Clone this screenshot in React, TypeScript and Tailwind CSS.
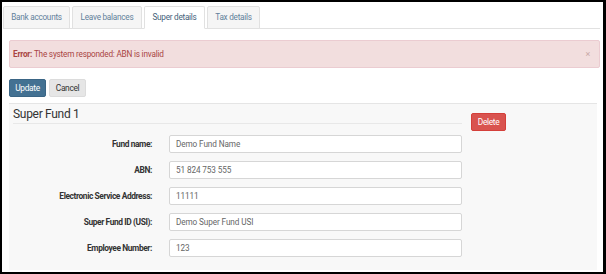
import React from 'react';

const tabs = [
  { name: 'Bank accounts', width: 'w-[67px]' },
  { name: 'Leave balances', width: 'w-[70px]' },
  { name: 'Super details', width: 'w-[61px]', active: true },
  { name: 'Tax details', width: 'w-[53px]' },
];

const fields = [
  { label: 'Fund name:', value: 'Demo Fund Name' },
  { label: 'ABN:', value: '51 824 753 555' },
  { label: 'Electronic Service Address:', value: '11111' },
  { label: 'Super Fund ID (USI):', value: 'Demo Super Fund USI' },
  { label: 'Employee Number:', value: '123' },
];

const App = () => {
  return (
    <div className="w-[606px] h-[274px] bg-black pt-[2px] pl-[2px] pr-[3px] pb-[2px] font-['Roboto',sans-serif]">
      <div className="h-full bg-white flex flex-col overflow-hidden">
        {/* Tabs */}
        <div className="mt-[4px] ml-[1px] mr-[3px] flex gap-[2px] border-b border-[#e1e1e1]">
          {tabs.map((tab) => (
            <div
              key={tab.name}
              className={`${tab.width} h-[23px] -mb-px flex items-center justify-center text-[8.2px] tracking-[-0.25px] border border-[#e1e1e1] rounded-t-[2px] ${
                tab.active ? 'bg-white border-b-white text-[#44617a]' : 'bg-[#f5f5f5] text-[#62819b]'
              }`}
            >
              {tab.name}
            </div>
          ))}
        </div>

        {/* Error alert */}
        <div className="mt-[11px] ml-[7px] mr-[3px] h-[28px] flex items-center justify-between bg-[#f2dede] border border-[#ebccd1] rounded-[2px] pl-[3px] pr-[9px] text-[8.2px] tracking-[-0.2px] text-[#a94442]">
          <span>
            <span className="font-bold">Error:</span> The system responded: ABN is invalid
          </span>
          <span className="text-[9px] text-[#c9a8a8] leading-none">×</span>
        </div>

        {/* Actions */}
        <div className="mt-[11px] ml-[7px] flex gap-[3px]">
          <button className="w-[37px] h-[18px] rounded-[2px] bg-[#437192] border border-[#3a6585] text-white text-[8.4px] tracking-[-0.35px]">
            Update
          </button>
          <button className="w-[37px] h-[18px] rounded-[2px] bg-[#e6e6e6] border border-[#dcdcdc] text-[#333] text-[8.4px] tracking-[-0.35px]">
            Cancel
          </button>
        </div>

        {/* Super fund panel */}
        <div className="mt-[6px] ml-[7px] mr-[6px] flex-1 mb-[2px] bg-[#f8f8f8] border-t border-[#e5e5e5] flex">
          <div className="w-[453px] flex flex-col">
            <div className="ml-[4px] pt-[3px] h-[20px] border-b border-[#e8e8e8] text-[12px] tracking-[-0.3px] leading-[15px] text-[#333]">
              Super Fund 1
            </div>
            <div className="mt-[11px] flex flex-col gap-[8px]">
              {fields.map((f) => (
                <div key={f.label} className="flex items-center h-[18px]">
                  <div className="w-[143px] text-right text-[8.4px] tracking-[-0.4px] font-bold text-[#333]">{f.label}</div>
                  <div className="ml-[17px] w-[293px] h-[18px] bg-white border border-[#d6d6d6] rounded-[2px] flex items-center px-[6px] text-[8.2px] tracking-[-0.1px] text-[#666]">
                    {f.value}
                  </div>
                </div>
              ))}
            </div>
          </div>
          <div className="ml-[9px] mt-[4px]">
            <button className="w-[35px] h-[18px] rounded-[2px] bg-[#d9534f] border border-[#d43f3a] text-white text-[8.4px] tracking-[-0.35px]">
              Delete
            </button>
          </div>
        </div>
      </div>
    </div>
  );
};

export default App;
